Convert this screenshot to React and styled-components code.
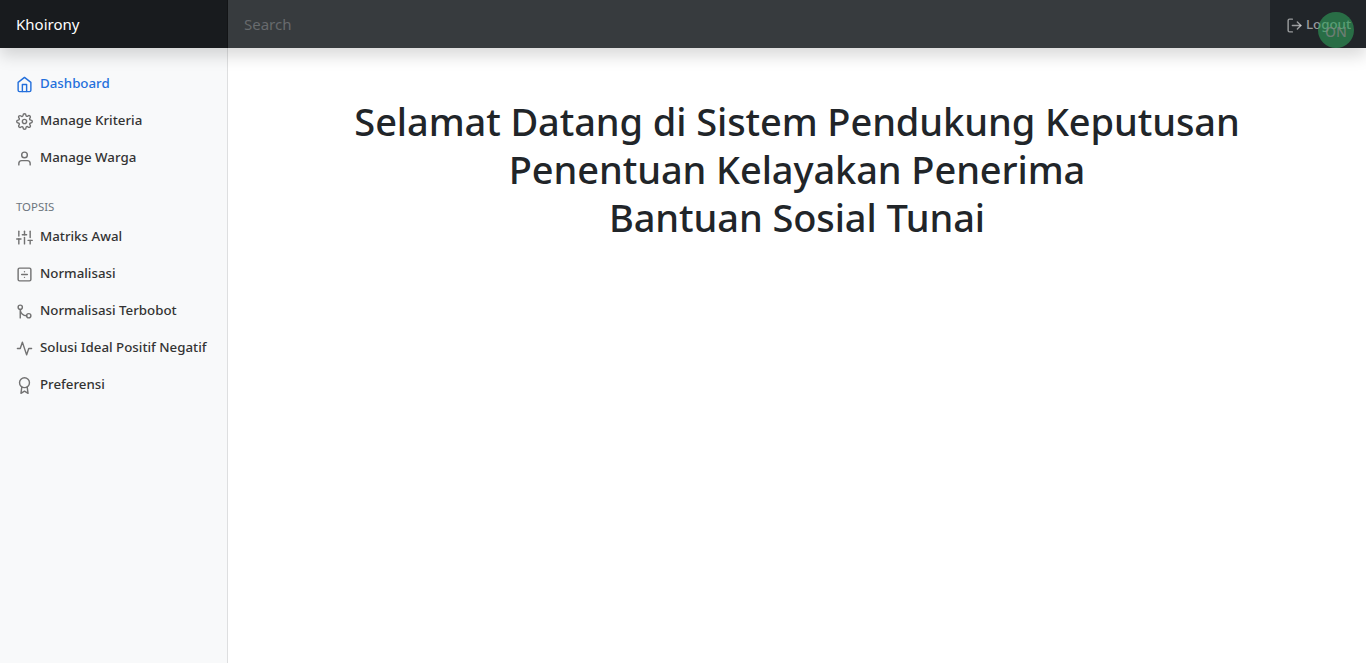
import React from 'react'
import styled, { createGlobalStyle } from 'styled-components'
import { FiHome, FiSettings, FiUser, FiSliders, FiDivideSquare, FiGitMerge, FiActivity, FiAward, FiLogOut } from 'react-icons/fi'

const GlobalStyle = createGlobalStyle`
  * { box-sizing: border-box; }
  html, body { margin: 0; height: 100%; }
  body {
    font-family: "Noto Sans", "Open Sans", Arial, sans-serif;
    font-size: 16px;
    line-height: 1.5;
    color: #212529;
    background: #fff;
  }
`

const Page = styled.div`
  height: 663px;
  overflow: hidden;
  display: flex;
  flex-direction: column;
`

const Topbar = styled.header`
  position: relative;
  z-index: 2;
  flex: 0 0 48px;
  display: flex;
  align-items: stretch;
  background: #212529;
  box-shadow: 0 8px 16px rgba(0, 0, 0, 0.15);
`

const Brand = styled.a`
  flex: 0 0 228px;
  padding-left: 16px;
  display: flex;
  align-items: center;
  font-size: 15px;
  color: #fff;
  background: rgba(0, 0, 0, 0.25);
  box-shadow: inset -1px 0 0 rgba(0, 0, 0, 0.25);
`

const Search = styled.input`
  flex: 1;
  min-width: 0;
  border: 0;
  outline: 0;
  padding: 0 16px;
  font: inherit;
  font-size: 15px;
  color: #fff;
  background: rgba(255, 255, 255, 0.1);
  &::placeholder { color: rgba(255, 255, 255, 0.25); }
`

const LogoutCell = styled.div`
  position: relative;
  flex: 0 0 96px;
  display: flex;
  align-items: center;
  padding: 2px 0 0 16px;
`

const LogoutLink = styled.a`
  display: flex;
  align-items: center;
  gap: 3px;
  font-size: 13.3px;
  font-weight: 500;
  color: rgba(255, 255, 255, 0.55);
  svg { flex: none; }
`

const StatusBadge = styled.span`
  position: absolute;
  top: 12px;
  right: 12px;
  width: 36px;
  height: 36px;
  padding-top: 2px;
  border-radius: 50%;
  display: flex;
  align-items: center;
  justify-content: center;
  font-size: 14px;
  font-weight: 500;
  color: rgba(130, 130, 130, 0.75);
  background: rgba(46, 160, 90, 0.6);
`

const Body = styled.div`
  flex: 1;
  display: flex;
  min-height: 0;
`

const Sidebar = styled.nav`
  flex: 0 0 228px;
  padding-top: 17px;
  background: #f8f9fa;
  box-shadow: inset -1px 0 0 rgba(0, 0, 0, 0.1);
`

const NavList = styled.ul`
  list-style: none;
  margin: 0;
  padding: 0;
`

const NavLink = styled.a`
  display: flex;
  align-items: center;
  gap: 7px;
  height: 37px;
  padding-left: 16px;
  font-size: 13.3px;
  font-weight: 500;
  white-space: nowrap;
  color: ${p => (p.$active ? '#2470dc' : '#333')};
  svg {
    flex: none;
    margin-top: 1px;
    color: ${p => (p.$active ? '#2470dc' : '#727272')};
  }
`

const SectionTitle = styled.h6`
  margin: 22px 0 2px;
  padding: 0 16px;
  height: 18px;
  font-size: 11.4px;
  font-weight: 400;
  line-height: 18px;
  text-transform: uppercase;
  color: #6c757d;
`

const Main = styled.main`
  flex: 1;
  min-width: 0;
  padding-top: 49px;
`

const Heading = styled.h1`
  margin: 0;
  font-size: 38px;
  font-weight: 500;
  line-height: 48px;
  letter-spacing: -0.1px;
  text-align: center;
  color: #212529;
`

const mainItems = [
  { label: 'Dashboard', icon: FiHome, active: true },
  { label: 'Manage Kriteria', icon: FiSettings },
  { label: 'Manage Warga', icon: FiUser },
]

const topsisItems = [
  { label: 'Matriks Awal', icon: FiSliders },
  { label: 'Normalisasi', icon: FiDivideSquare },
  { label: 'Normalisasi Terbobot', icon: FiGitMerge },
  { label: 'Solusi Ideal Positif Negatif', icon: FiActivity },
  { label: 'Preferensi', icon: FiAward },
]

function NavItems({ items }) {
  return (
    <NavList>
      {items.map(({ label, icon: Icon, active }) => (
        <li key={label}>
          <NavLink $active={active}>
            <Icon size={17} />
            {label}
          </NavLink>
        </li>
      ))}
    </NavList>
  )
}

export default function App() {
  return (
    <Page>
      <GlobalStyle />
      <Topbar>
        <Brand>Khoirony</Brand>
        <Search placeholder="Search" />
        <LogoutCell>
          <LogoutLink><FiLogOut size={17} />Logout</LogoutLink>
          <StatusBadge>ON</StatusBadge>
        </LogoutCell>
      </Topbar>
      <Body>
        <Sidebar>
          <NavItems items={mainItems} />
          <SectionTitle>Topsis</SectionTitle>
          <NavItems items={topsisItems} />
        </Sidebar>
        <Main>
          <Heading>
            Selamat Datang di Sistem Pendukung Keputusan<br />
            Penentuan Kelayakan Penerima<br />
            Bantuan Sosial Tunai
          </Heading>
        </Main>
      </Body>
    </Page>
  )
}
